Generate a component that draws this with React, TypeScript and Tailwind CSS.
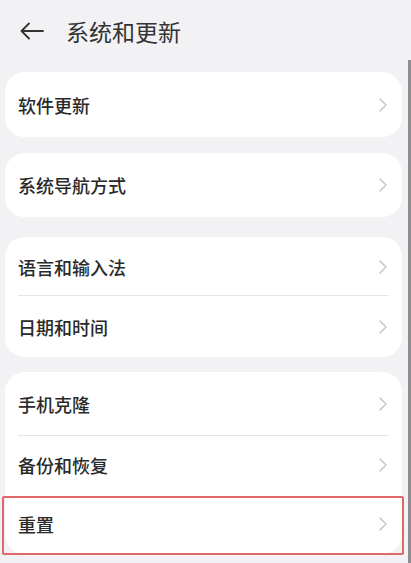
import React from "react";

const Chevron = () => (
  <svg width="8" height="14" viewBox="0 0 8 14" fill="none" className="shrink-0">
    <path d="M1 1l6 6-6 6" stroke="#c6c6c8" strokeWidth="1.5" strokeLinecap="round" strokeLinejoin="round" />
  </svg>
);

type RowProps = { label: string; h: string; divider?: boolean; highlight?: boolean };

const Row = ({ label, h, divider, highlight }: RowProps) => (
  <div className={`relative flex items-center justify-between pl-[13px] pr-[15px] ${h}`}>
    <span className="text-[18px] font-medium text-[#2a2a2a] leading-none">{label}</span>
    <Chevron />
    {divider && <div className="absolute left-[13px] right-[13px] bottom-0 h-px bg-[#e6e6e8]" />}
    {highlight && (
      <div className="absolute left-[-3px] right-[-2px] top-[2px] bottom-[-1px] border-2 border-[#e06868] rounded-[2px]" />
    )}
  </div>
);

export default function App() {
  return (
    <div
      className="relative w-[411px] h-[563px] overflow-hidden bg-[#f2f2f4]"
      style={{ fontFamily: '"Noto Sans CJK SC", "Noto Sans", sans-serif' }}
    >
      <div className="flex items-center h-[62px] pl-[20px] gap-[22px]">
        <svg width="24" height="18" viewBox="0 0 24 18" fill="none">
          <path d="M23 9H2M9 1.5L1.5 9 9 16.5" stroke="#333" strokeWidth="1.8" strokeLinecap="round" strokeLinejoin="round" />
        </svg>
        <span className="text-[23px] text-[#333] leading-none">系统和更新</span>
      </div>

      <div className="flex flex-col pl-[5px] pr-[9px] pt-[10px]">
        <div className="bg-white rounded-[20px]">
          <Row label="软件更新" h="h-[65px]" />
        </div>
        <div className="bg-white rounded-[20px] mt-[16px]">
          <Row label="系统导航方式" h="h-[64px]" />
        </div>
        <div className="bg-white rounded-[20px] mt-[20px]">
          <Row label="语言和输入法" h="h-[59px]" divider />
          <Row label="日期和时间" h="h-[61px]" />
        </div>
        <div className="bg-white rounded-[20px] mt-[15px]">
          <Row label="手机克隆" h="h-[64px]" divider />
          <Row label="备份和恢复" h="h-[58px]" />
          <Row label="重置" h="h-[60px]" highlight />
        </div>
      </div>

      <div className="absolute right-0 top-[60px] bottom-0 w-[3px] bg-[#8e8e90]" />
    </div>
  );
}
